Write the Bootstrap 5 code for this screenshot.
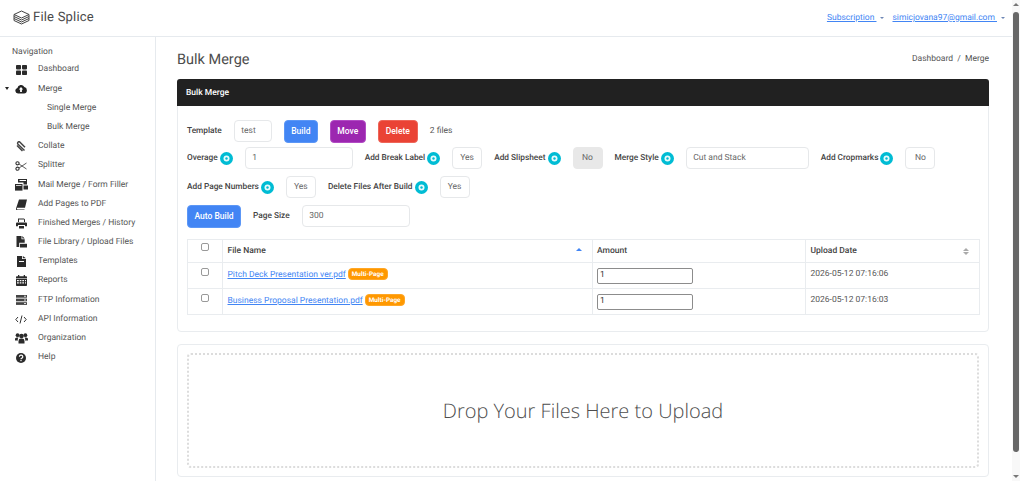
<!DOCTYPE html>
<html lang="en"><head><meta charset="utf-8"><title>Bulk Merge</title>
<link href="https://cdn.jsdelivr.net/npm/bootstrap@5.3.0/dist/css/bootstrap.min.css" rel="stylesheet">
<style>
html,body{height:481px;overflow:hidden}
body{font-family:Roboto,"Liberation Sans",sans-serif;font-size:8.5px;color:#555;background:#fff;text-rendering:geometricPrecision}
a{color:#4285f4}
.fs-shell{width:1020px;height:481px}
.fs-page{width:1012px;height:481px}
.fs-top{height:37px;border-bottom:1px solid #e6eaee;padding:0 7px 0 13px}
.fs-logo{font-size:13px;color:#4a4a4a;letter-spacing:.2px;gap:3px}
.fs-top a{font-size:8.5px}
.fs-mini-caret{width:0;height:0;border:2.2px solid transparent;border-top:2.8px solid #6f87b5;border-bottom:0}
.fs-side{width:156px;border-right:1px solid #e6eaee;padding-top:10px;flex:none}
.fs-side-title{font-size:8.5px;line-height:10px;padding-left:12px;margin-bottom:3.2px;color:#555;height:10px}
.fs-item{height:19.2px;color:#555}
.fs-gutter{width:7px;flex:none;display:flex;justify-content:center;padding-left:7px}
.fs-ico{width:18px;margin-left:5px;margin-right:8px;flex:none;display:flex;justify-content:center;color:#2b2b2b}
.fs-sub{padding-left:47px}
.fs-arrow{width:0;height:0;border:2.5px solid transparent;border-top:3px solid #222;border-bottom:0}
.fs-main{padding:0 23px 0 21px;min-width:0}
.fs-head{height:42px;padding-top:3px}
.fs-title{font-size:14.5px;font-weight:400;margin:0;color:#4d4d4d}
.fs-crumb{font-size:8.5px;color:#555}
.fs-card{border:1px solid #e9ecef;border-radius:4px;background:#fff}
.fs-cardhead{height:27px;background:#212121;color:#fff;font-weight:500;font-size:8.5px;padding:1px 9px 0;border-radius:3px 3px 0 0;margin:-1px -1px 0}
.fs-body{padding:14px 9px 16px;height:225px}
.fs-row{gap:12px;align-items:center;height:22px}
.fs-row b{font-weight:500;font-size:8.3px;color:#444;white-space:nowrap}
.fs-lab{gap:2px}
.fs-box{height:22px;border:1px solid #e6e8ea;border-radius:4px;padding:0 6.5px;display:flex;align-items:center;color:#666;background:#fff;white-space:nowrap}
.fs-yes{padding:0;justify-content:center;width:30px}
.fs-grey{background:#e8e8e8;border-color:#e8e8e8}
.fs-btn{height:23px;border-radius:4px;color:#fff;font-size:8.5px;font-weight:500;padding:0;border:1px solid transparent}
.fs-blue{background:#4285f4;border-color:#5c97f6}
.fs-purple{background:#9c27b0;border-color:#b24cc4}
.fs-red{background:#ea4335;border-color:#ee6659}
.fs-table{width:792px;border-collapse:collapse;table-layout:fixed;margin:0}
.fs-table td,.fs-table th{border:1px solid #e9ecef;padding:0 5px 0 4.5px;font-size:8.5px;color:#555}
.fs-table th{height:23px;font-weight:500;color:#444}
.fs-table td{height:26px;padding-bottom:2px}
.fs-table tr>*:first-child{text-align:center;padding:0 0 2px}
.fs-check{width:8px;height:8px;border:1px solid #999;border-radius:2px;display:inline-block;background:#fff;vertical-align:1px}
.fs-chip{background:#ff9800;color:#fff;font-weight:700;font-size:6.4px;border-radius:4px;padding:1px 3px;line-height:8px;display:inline-block;margin-left:2px;border:1px solid #ffa726;vertical-align:1px}
.fs-amt{width:96px;height:16px;margin-top:2px;border:1px solid #8c8c8c;border-radius:2px;padding:0 2px;display:flex;align-items:center;color:#333;font-size:8.5px;background:#fff}
.fs-sort{display:block;width:0;height:0;border:3px solid transparent}
.fs-drop-card{margin-top:12px;height:133px;padding:8px 9px;flex:none}
.fs-drop{height:115px;border:2px dotted #dcdcdc;border-radius:4px;font-size:20px;font-weight:300;color:#4d4d4d;font-family:"Open Sans",Roboto,sans-serif}
.fs-bar{width:8px;background:#f8f8f8;flex:none;padding:3px 0;justify-content:space-between}
.fs-thumb{width:6px;margin:6px auto auto;background:#676767;border-radius:3px;height:440px}
.fs-ta{width:0;height:0;border:3.5px solid transparent;margin:0 auto}
</style></head><body>
<div class="d-flex fs-shell">
<div class="fs-page d-flex flex-column">
 <header class="fs-top d-flex align-items-center justify-content-between">
  <div class="fs-logo d-flex align-items-center">
   <svg width="17" height="16" viewBox="0 0 17 16" fill="none" stroke="#444" stroke-width="1"><path d="M8.500 1 16 4.500 8.500 8 1 4.500Z"/><path d="M1 6.500 8.500 10 16 6.500M1 8.500 8.500 12 16 8.500M1 10.500 8.500 14 16 10.500M1 4.500V10.500M16 4.500V10.500"/></svg>
   <span>File Splice</span></div>
  <div class="d-flex align-items-center">
   <a href="#">Subscription&nbsp;</a><span class="fs-mini-caret ms-1 me-2"></span>
   <a href="#">simicjovana97@gmail.com&nbsp;</a><span class="fs-mini-caret ms-1"></span>
  </div>
 </header>
 <div class="d-flex flex-grow-1" style="min-height:0">
  <nav class="fs-side">
   <div class="fs-side-title">Navigation</div>
   <div class="fs-item d-flex align-items-center"><span class="fs-gutter"></span><span class="fs-ico"><svg width="11" height="10" viewBox="0 0 11 10" fill="#2b2b2b"><rect width="5" height="4.400" rx=".8"/><rect x="6" width="5" height="4.400" rx=".8"/><rect y="5.600" width="5" height="4.400" rx=".8"/><rect x="6" y="5.600" width="5" height="4.400" rx=".8"/></svg></span>Dashboard</div>
   <div class="fs-item d-flex align-items-center"><span class="fs-gutter"><span class="fs-arrow"></span></span><span class="fs-ico"><svg width="12" height="10" viewBox="0 0 12 10"><path fill="#222" d="M3 9.500a2.800 2.800 0 0 1-.6-5.500A3.700 3.700 0 0 1 9.300 3 3.300 3.300 0 0 1 9 9.500Z"/><path fill="#fff" d="M6 3 8.200 5.500H6.900V8H5.100V5.500H3.800Z"/></svg></span>Merge</div>
   <div class="fs-item fs-sub d-flex align-items-center">Single Merge</div>
   <div class="fs-item fs-sub d-flex align-items-center">Bulk Merge</div>
   <div class="fs-item d-flex align-items-center"><span class="fs-gutter"></span><span class="fs-ico"><svg width="10" height="11" viewBox="0 0 10 11" fill="none" stroke="#444" stroke-width="1.500"><path d="M8.500 9.500 2 3.200a1.400 1.400 0 0 1 2-2L9 6.300"/><path d="M1 4.500 6.500 10"/></svg></span>Collate</div>
   <div class="fs-item d-flex align-items-center"><span class="fs-gutter"></span><span class="fs-ico"><svg width="12" height="10" viewBox="0 0 12 10" fill="none" stroke="#333" stroke-width="1.100"><circle cx="2.500" cy="2.300" r="1.600"/><circle cx="2.500" cy="7.700" r="1.600"/><path d="M4 3 11.500 8M4 7 11.500 2" stroke-width=".8"/></svg></span>Splitter</div>
   <div class="fs-item d-flex align-items-center"><span class="fs-gutter"></span><span class="fs-ico"><svg width="13" height="12" viewBox="0 0 13 12" fill="#2b2b2b"><path d="M3 0h9v5.500H8.500V3.600H3Z"/><path d="M0 5h7.500v6.600H0Z"/><path d="M8.500 6.500H13V10.500H8.500Z"/><path fill="#fff" d="M1 6.200h5.500v.8H1ZM4.500 1h6.500v1H4.500Z"/></svg></span>Mail Merge / Form Filler</div>
   <div class="fs-item d-flex align-items-center"><span class="fs-gutter"></span><span class="fs-ico"><svg width="11" height="11" viewBox="0 0 11 11" fill="#2b2b2b"><path d="M3 .5h8L9 8.700H1.400a1 1 0 0 0 0 1.800H8.500V11H1.300A1.300 1.300 0 0 1 0 9.400Z"/></svg></span>Add Pages to PDF</div>
   <div class="fs-item d-flex align-items-center"><span class="fs-gutter"></span><span class="fs-ico"><svg width="11" height="11" viewBox="0 0 11 11" fill="#2b2b2b"><path d="M2 .5h6l1 1V4H8V1.500H3V4H2Z"/><path d="M1 4.500h9a1 1 0 0 1 1 1V8.300H9V7H2v1.300H0V5.500a1 1 0 0 1 1-1Z"/><path d="M3 8h5v2.500H3Z"/></svg></span>Finished Merges / History</div>
   <div class="fs-item d-flex align-items-center"><span class="fs-gutter"></span><span class="fs-ico"><svg width="11" height="12" viewBox="0 0 11 12" fill="#2b2b2b"><path d="M.5 0h5v3.200h3.200v3.600H3.200V11H.5Z"/><path d="M6.300 0l2.400 2.500H6.300Z"/><path d="M4 7.800h7v3.700H4Z"/></svg></span>File Library / Upload Files</div>
   <div class="fs-item d-flex align-items-center"><span class="fs-gutter"></span><span class="fs-ico"><svg width="9" height="11" viewBox="0 0 9 11" fill="#2b2b2b"><path d="M0 0h5v3h4v8H0Z"/><path d="M5.800 0 9 2.300H5.800Z"/><path fill="#fff" d="M2 5h5v1H2Z"/></svg></span>Templates</div>
   <div class="fs-item d-flex align-items-center"><span class="fs-gutter"></span><span class="fs-ico"><svg width="11" height="11" viewBox="0 0 11 11" fill="#2b2b2b"><path d="M2 0h1.300v1.300h4.400V0H9v1.300h1.200a.8.8 0 0 1 .8.8V3.200H0V2.100a.8.8 0 0 1 .8-.8H2Z"/><path fill-rule="evenodd" d="M0 3.800h11v6.400a.8.8 0 0 1-.8.8H.8a.8.8 0 0 1-.8-.8ZM1 5v1.200h1.800V5Zm2.700 0v1.200h1.700V5Zm2.600 0v1.200H8V5ZM9 5v1.200h1V5ZM1 7.200v1.200h1.800V7.200Zm2.700 0v1.200h1.700V7.200Zm2.600 0v1.200H8V7.200Zm2.700 0v1.200h1V7.200Z"/></svg></span>Reports</div>
   <div class="fs-item d-flex align-items-center"><span class="fs-gutter"></span><span class="fs-ico"><svg width="11" height="10" viewBox="0 0 11 10" fill="#444"><rect width="11" height="2.700"/><rect y="3.600" width="11" height="2.700"/><rect y="7.200" width="11" height="2.700"/><path fill="#ddd" d="M8 .8h2v1H8ZM8 4.400h2v1H8ZM8 8h2v1H8Z"/></svg></span>FTP Information</div>
   <div class="fs-item d-flex align-items-center"><span class="fs-gutter"></span><span class="fs-ico"><svg width="12" height="9" viewBox="0 0 12 9" fill="none" stroke="#333" stroke-width="1"><path d="M3 2 .8 4.500 3 7M9 2l2.200 2.500L9 7M7 .5l-2 8"/></svg></span>API Information</div>
   <div class="fs-item d-flex align-items-center"><span class="fs-gutter"></span><span class="fs-ico"><svg width="13" height="11" viewBox="0 0 13 11" fill="#2b2b2b"><circle cx="2.600" cy="2.200" r="1.900"/><circle cx="10.400" cy="2.200" r="1.900"/><circle cx="6.500" cy="3" r="2.300"/><path d="M0 7a2 2 0 0 1 2-2.600h1.500A3 3 0 0 0 3 7.500H0ZM13 7a2 2 0 0 0-2-2.600H9.500A3 3 0 0 1 10 7.500H13Z"/><path d="M3.500 8a2.500 2.500 0 0 1 2.500-2.400h1A2.500 2.500 0 0 1 9.500 8v2.500h-6Z"/></svg></span>Organization</div>
   <div class="fs-item d-flex align-items-center"><span class="fs-gutter"></span><span class="fs-ico"><svg width="10" height="10" viewBox="0 0 10 10"><circle cx="5" cy="5" r="5" fill="#2b2b2b"/><path d="M3.400 3.800A1.700 1.600 0 1 1 5.500 5.300Q5 5.500 5 6.200" fill="none" stroke="#fff" stroke-width="1.200"/><rect x="4.400" y="7" width="1.200" height="1.200" fill="#fff"/></svg></span>Help</div>
  </nav>
  <main class="fs-main flex-grow-1 d-flex flex-column">
   <div class="fs-head d-flex align-items-center justify-content-between">
    <h1 class="fs-title">Bulk Merge</h1>
    <div class="fs-crumb">Dashboard &nbsp;/&nbsp; Merge</div>
   </div>
   <section class="fs-card">
    <div class="fs-cardhead d-flex align-items-center">Bulk Merge</div>
    <div class="fs-body">
     <div class="d-flex fs-row">
      <b>Template</b><span class="fs-box" style="width:38px">test</span>
      <button class="fs-btn fs-blue" style="width:34px">Build</button>
      <button class="fs-btn fs-purple" style="width:36px">Move</button>
      <button class="fs-btn fs-red" style="width:40px">Delete</button>
      <span>2 files</span>
     </div>
     <div class="d-flex fs-row" style="margin-top:5px">
      <span class="d-flex align-items-center fs-lab"><b>Overage</b><svg width="13" height="13" viewBox="0 0 13 13"><circle cx="6.500" cy="6.500" r="6.500" fill="#00bcd4"/><circle cx="6.500" cy="6.500" r="3" fill="#e8fafc"/><circle cx="6.500" cy="6.500" r="1.200" fill="#00bcd4"/></svg></span>
      <span class="fs-box" style="width:108px">1</span>
      <span class="d-flex align-items-center fs-lab"><b>Add Break Label</b><svg width="13" height="13" viewBox="0 0 13 13"><circle cx="6.500" cy="6.500" r="6.500" fill="#00bcd4"/><circle cx="6.500" cy="6.500" r="3" fill="#e8fafc"/><circle cx="6.500" cy="6.500" r="1.200" fill="#00bcd4"/></svg></span>
      <span class="fs-box fs-yes">Yes</span>
      <span class="d-flex align-items-center fs-lab"><b>Add Slipsheet</b><svg width="13" height="13" viewBox="0 0 13 13"><circle cx="6.500" cy="6.500" r="6.500" fill="#00bcd4"/><circle cx="6.500" cy="6.500" r="3" fill="#e8fafc"/><circle cx="6.500" cy="6.500" r="1.200" fill="#00bcd4"/></svg></span>
      <span class="fs-box fs-yes fs-grey">No</span>
      <span class="d-flex align-items-center fs-lab"><b>Merge Style</b><svg width="13" height="13" viewBox="0 0 13 13"><circle cx="6.500" cy="6.500" r="6.500" fill="#00bcd4"/><circle cx="6.500" cy="6.500" r="3" fill="#e8fafc"/><circle cx="6.500" cy="6.500" r="1.200" fill="#00bcd4"/></svg></span>
      <span class="fs-box" style="width:123px">Cut and Stack</span>
      <span class="d-flex align-items-center fs-lab"><b>Add Cropmarks</b><svg width="13" height="13" viewBox="0 0 13 13"><circle cx="6.500" cy="6.500" r="6.500" fill="#00bcd4"/><circle cx="6.500" cy="6.500" r="3" fill="#e8fafc"/><circle cx="6.500" cy="6.500" r="1.200" fill="#00bcd4"/></svg></span>
      <span class="fs-box fs-yes">No</span>
     </div>
     <div class="d-flex fs-row" style="margin-top:7px">
      <span class="d-flex align-items-center fs-lab"><b>Add Page Numbers</b><svg width="13" height="13" viewBox="0 0 13 13"><circle cx="6.500" cy="6.500" r="6.500" fill="#00bcd4"/><circle cx="6.500" cy="6.500" r="3" fill="#e8fafc"/><circle cx="6.500" cy="6.500" r="1.200" fill="#00bcd4"/></svg></span>
      <span class="fs-box fs-yes">Yes</span>
      <span class="d-flex align-items-center fs-lab"><b>Delete Files After Build</b><svg width="13" height="13" viewBox="0 0 13 13"><circle cx="6.500" cy="6.500" r="6.500" fill="#00bcd4"/><circle cx="6.500" cy="6.500" r="3" fill="#e8fafc"/><circle cx="6.500" cy="6.500" r="1.200" fill="#00bcd4"/></svg></span>
      <span class="fs-box fs-yes">Yes</span>
     </div>
     <div class="d-flex fs-row" style="margin-top:7px">
      <button class="fs-btn fs-blue" style="width:54px">Auto Build</button>
      <b>Page Size</b>
      <span class="fs-box" style="width:108px">300</span>
     </div>
     <table class="fs-table" style="margin-top:12px">
      <colgroup><col style="width:35px"><col style="width:369.5px"><col style="width:213.5px"><col style="width:174px"></colgroup>
      <thead><tr><th><span class="fs-check"></span></th>
       <th><div class="d-flex justify-content-between align-items-center"><span>File Name</span><span class="fs-sort" style="border-bottom-color:#4285f4;border-top:0;margin-right:5px;margin-top:-3px"></span></div></th>
       <th>Amount</th>
       <th><div class="d-flex justify-content-between align-items-center"><span>Upload Date</span><span style="margin-right:5px"><span class="fs-sort" style="border-bottom-color:#aaa;border-top:0;margin-bottom:1px"></span><span class="fs-sort" style="border-top-color:#aaa;border-bottom:0"></span></span></div></th></tr></thead>
      <tbody>
       <tr><td><span class="fs-check"></span></td><td><a href="#">Pitch Deck Presentation ver.pdf</a><span class="fs-chip">Multi-Page</span></td><td><div class="fs-amt">1</div></td><td>2026-05-12 07:16:06</td></tr>
       <tr><td><span class="fs-check"></span></td><td><a href="#">Business Proposal Presentation.pdf</a><span class="fs-chip">Multi-Page</span></td><td><div class="fs-amt">1</div></td><td>2026-05-12 07:16:03</td></tr>
      </tbody>
     </table>
    </div>
   </section>
   <section class="fs-card fs-drop-card">
    <div class="fs-drop d-flex align-items-center justify-content-center">Drop Your Files Here to Upload</div>
   </section>
  </main>
 </div>
</div>
<div class="fs-bar d-flex flex-column">
 <span class="fs-ta" style="border-top:0;border-bottom-color:#777"></span>
 <div class="fs-thumb"></div>
 <span class="fs-ta" style="border-bottom:0;border-top-color:#777"></span>
</div>
</div>
<script src="https://cdn.jsdelivr.net/npm/bootstrap@5.3.0/dist/js/bootstrap.bundle.min.js"></script>
</body></html>
